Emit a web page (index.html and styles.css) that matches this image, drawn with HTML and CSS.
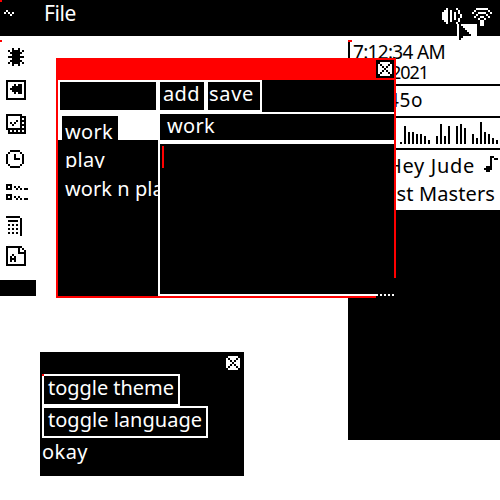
FILE: index.html
```html
<!DOCTYPE html>
<html lang="en">
<head>
<meta charset="utf-8">
<title>Desktop</title>
<link rel="stylesheet" href="styles.css">
</head>
<body>
<header class="menubar">
  <span class="tilde"><i data-icon="tilde"></i></span>
  <span class="file" data-w="32">File</span>
  <span class="tray"><i data-icon="sound"></i><i data-icon="wifi"></i></span>
</header>
<nav class="dock">
  <i data-icon="bug"></i>
  <i data-icon="rewind"></i>
  <i data-icon="tasks"></i>
  <i data-icon="clock"></i>
  <i data-icon="list"></i>
  <i data-icon="calc"></i>
  <i data-icon="font"></i>
  <div class="dock-end"></div>
</nav>
<aside class="panel">
  <div class="when"><div><span data-w="92">7:12:34 AM</span></div><div class="date"><span data-w="37">2021</span></div></div>
  <div class="temp"><span data-w="35">45o</span></div>
  <div class="wave"></div>
  <div class="song">
    <div class="track"><span data-w="88">Hey Jude</span><i data-icon="note"></i></div>
    <div class="album"><span data-w="122">Past Masters</span></div>
  </div>
</aside>
<section class="notes">
  <div class="title"><i data-icon="close"></i></div>
  <div class="body">
    <div class="left">
      <div class="search"></div>
      <div class="chosen"><span data-w="48">work</span></div>
      <div class="items">
        <div class="play"><span data-w="40">play</span></div>
        <div class="more"><span data-w="109">work n play</span></div>
      </div>
    </div>
    <div class="right">
      <div class="tools"><div class="add"><span data-w="37">add</span></div><div class="save"><span data-w="45">save</span></div></div>
      <div class="name"><span data-w="48">work</span></div>
      <div class="text"><div class="caret"></div></div>
    </div>
  </div>
  <div class="corner"></div>
</section>
<section class="settings">
  <div class="bar"><i data-icon="close"></i></div>
  <div class="button theme"><span data-w="126">toggle theme</span></div>
  <div class="button language"><span data-w="154">toggle language</span></div>
  <div class="okay"><span data-w="46">okay</span></div>
</section>
<div class="pointer"><i data-icon="pointer"></i></div>
<div class="dot dot-a"></div><div class="dot dot-b"></div><div class="dot dot-c"></div><div class="dot dot-d"></div>
<script src="icons.js"></script>
</body>
</html>
```
FILE: styles.css
```css
* { box-sizing: border-box; }
body { margin: 0; width: 500px; height: 500px; overflow: hidden; position: relative; background: #fff; color: #000; font: 20px/28px "Noto Sans", sans-serif; }
span { white-space: nowrap; }
svg { display: block; fill: currentColor; shape-rendering: crispEdges; }
i { display: block; flex: none; }
.menubar { height: 36px; background: #000; color: #fff; display: flex; }
.tilde { padding: 10px 0 0 4px; width: 44px; }
.file { margin-top: -1px; font-size: 21px; }
.tray { margin-left: auto; padding: 8px 8px 0 0; display: flex; gap: 10px; }
.dock { width: 36px; padding-top: 12px; display: flex; flex-direction: column; }
.dock i { margin-left: 6px; height: 20px; margin-bottom: 14px; }
.dock i:nth-child(1) { margin: 0 0 12px 8px; }
.dock i:nth-child(4) { margin: 2px 0 14px 6px; }
.dock i:nth-child(6) { margin-bottom: 10px; margin-top: -2px; }
.dock-end { height: 16px; background: #000; }
.panel { position: absolute; left: 348px; top: 40px; width: 152px; height: 400px; background: #000; }
.panel > div { background: #fff; border-bottom: 2px solid #000; }
.when { height: 46px; border-left: 2px solid #000; line-height: 19px; padding: 3px 0 0 3px; font-size: 19px; }
.date { padding-left: 38px; line-height: 20px; font-size: 18px; }
.temp { height: 32px; padding: 0 0 0 40px; font-size: 19px; }
.wave { height: 32px; padding: 0 0 4px 52px; display: flex; align-items: flex-end; gap: 2px; }
.wave b { width: 2px; background: #000; flex: none; }
.song { height: 62px; padding-top: 2px; }
.track { display: flex; padding-left: 39px; height: 28px; }
.track i { margin: 4px 0 0 9px; }
.album { padding-left: 25px; }
.notes { position: absolute; left: 56px; top: 58px; width: 340px; height: 240px; border: 2px solid #f00; background: #000; color: #fff; }
.title { height: 20px; background: #f00; display: flex; justify-content: flex-end; }
.title i { width: 18px; height: 18px; background: #000; padding: 2px; }
.body { display: flex; height: 216px; }
.left { width: 102px; background: #fff; border-right: 2px solid #fff; overflow: hidden; display: flex; flex-direction: column; }
.search { height: 28px; width: 96px; margin: 2px 0 6px 2px; background: #000; flex: none; }
.chosen { width: 56px; height: 24px; margin-left: 4px; background: #000; padding: 2px 0 0 3px; overflow: hidden; flex: none; }
.items { width: 100px; height: 156px; background: #000; padding: 6px 0 0 7px; overflow: hidden; flex: none; }
.play { height: 22px; overflow: hidden; }
.more { margin-top: 7px; }
.right { flex: 1; display: flex; flex-direction: column; }
.tools { height: 32px; display: flex; }
.add, .save { height: 32px; border: 2px solid #fff; line-height: 24px; }
.add { width: 46px; border-left: 0; padding-left: 3px; }
.save { width: 56px; padding-left: 1px; }
.name { height: 30px; border-top: 2px solid #fff; border-bottom: 2px solid #fff; padding: 0 0 0 7px; line-height: 24px; }
.text { flex: 1; border-top: 2px solid #fff; border-bottom: 2px solid #fff; padding: 2px; }
.caret { width: 2px; height: 22px; background: #f00; }
.corner { position: absolute; right: -2px; bottom: -2px; width: 20px; height: 20px; background: repeating-linear-gradient(90deg, #fff 0 2px, #000 2px 4px) 0 16px / 18px 2px no-repeat #000; }
.settings { position: absolute; left: 40px; top: 352px; width: 204px; height: 124px; background: #000; color: #fff; padding-left: 2px; }
.bar { height: 22px; display: flex; justify-content: flex-end; padding: 4px 4px 0 0; }
.button { height: 32px; border: 2px solid #fff; padding-left: 4px; line-height: 24px; }
.theme { width: 138px; }
.language { width: 166px; }
.okay { line-height: 27px; }
.pointer { position: absolute; left: 457px; top: 24px; width: 20px; height: 12px; background: #fff; color: #000; padding-left: 2px; }
.dot { position: absolute; width: 2px; height: 2px; background: #f00; }
.dot-a { left: 0; top: 0; }
.dot-b { left: 0; top: 40px; }
.dot-c { left: 348px; top: 40px; width: 4px; }
.dot-d { left: 42px; top: 374px; }
```
FILE: icons.js
```js
// Icons are drawn on a grid of 2px cells.
const icons = {
  tilde: ".#.../#.#.#/...#.",
  sound: "..#....#../.##.#...#./###.#.#.#./###.#.#..#/###.#.#..#/###.#.#.#./.##.#...#./..#....#..",
  wifi: "..######../.#......#./#..####..#/..#....#../.#..##..#./...#..#.../....##..../....##..../....##....",
  bug: "..#..#../#.####.#/.######./..####../########/..####../.######./#.####.#/..#..#..",
  rewind: "##########/#........#/#...#.##.#/#..#####.#/#.######.#/#..#####.#/#...#.##.#/#........#/#........#/##########",
  tasks: "########../#......###/#......#.#/#....#.###/#.#.#..#.#/#..#...###/#......#.#/##########/.#.#.#.#.#/.#########",
  clock: "..#####../.#.....#./#...#...#/#...#...#/#...###.#/#.......#/#.......#/.#.....#./..#####..",
  list: "###......./#.#.#.#.../###..#.#.##/........../........../###......./#.#.#.#.../###..#.#.##",
  calc: "#######./.......#/.#####.#/.......#/.#.#.#.#/.......#/.#.#.#.#/.......#/.#.#.#.#/.......#",
  font: "########../#.....#.#./#.....#..#/#.....####/#..#.....#/#.#.#....#/#.###....#/#.#.#....#/#........#/##########",
  close: ".#####./#.###.#/##.#.##/###.###/##.#.##/#.###.#/.#####.",
  note: "...##../...#.##/...#.../...#.../...#.../.###.../####.../.##....",
  pointer: "#...../##..../###.../####../#####./######/##..../#....."
};
for (const el of document.querySelectorAll("[data-icon]")) {
  const rows = icons[el.dataset.icon].split("/");
  const w = Math.max(...rows.map(r => r.length)) * 2;
  let d = "";
  rows.forEach((r, y) => [...r].forEach((c, x) => {
    if (c === "#") d += `M${x * 2} ${y * 2}h2v2h-2z`;
  }));
  el.innerHTML = `<svg width="${w}" height="${rows.length * 2}"><path d="${d}"/></svg>`;
}
// Equalizer bars
const wave = document.querySelector(".wave");
for (const h of [2, 18, 12, 12, 10, 10, 8, 4, 0, 8, 20, 8, 18, 0, 18, 20, 16, 0, 10, 6, 22, 12, 10, 6, 4]) {
  const bar = document.createElement("b");
  bar.style.height = h + "px";
  wave.append(bar);
}
for (const el of document.querySelectorAll("[data-w]")) {
  const natural = el.getBoundingClientRect().width;
  el.style.letterSpacing = (el.dataset.w - natural) / el.textContent.length + "px";
}
```
